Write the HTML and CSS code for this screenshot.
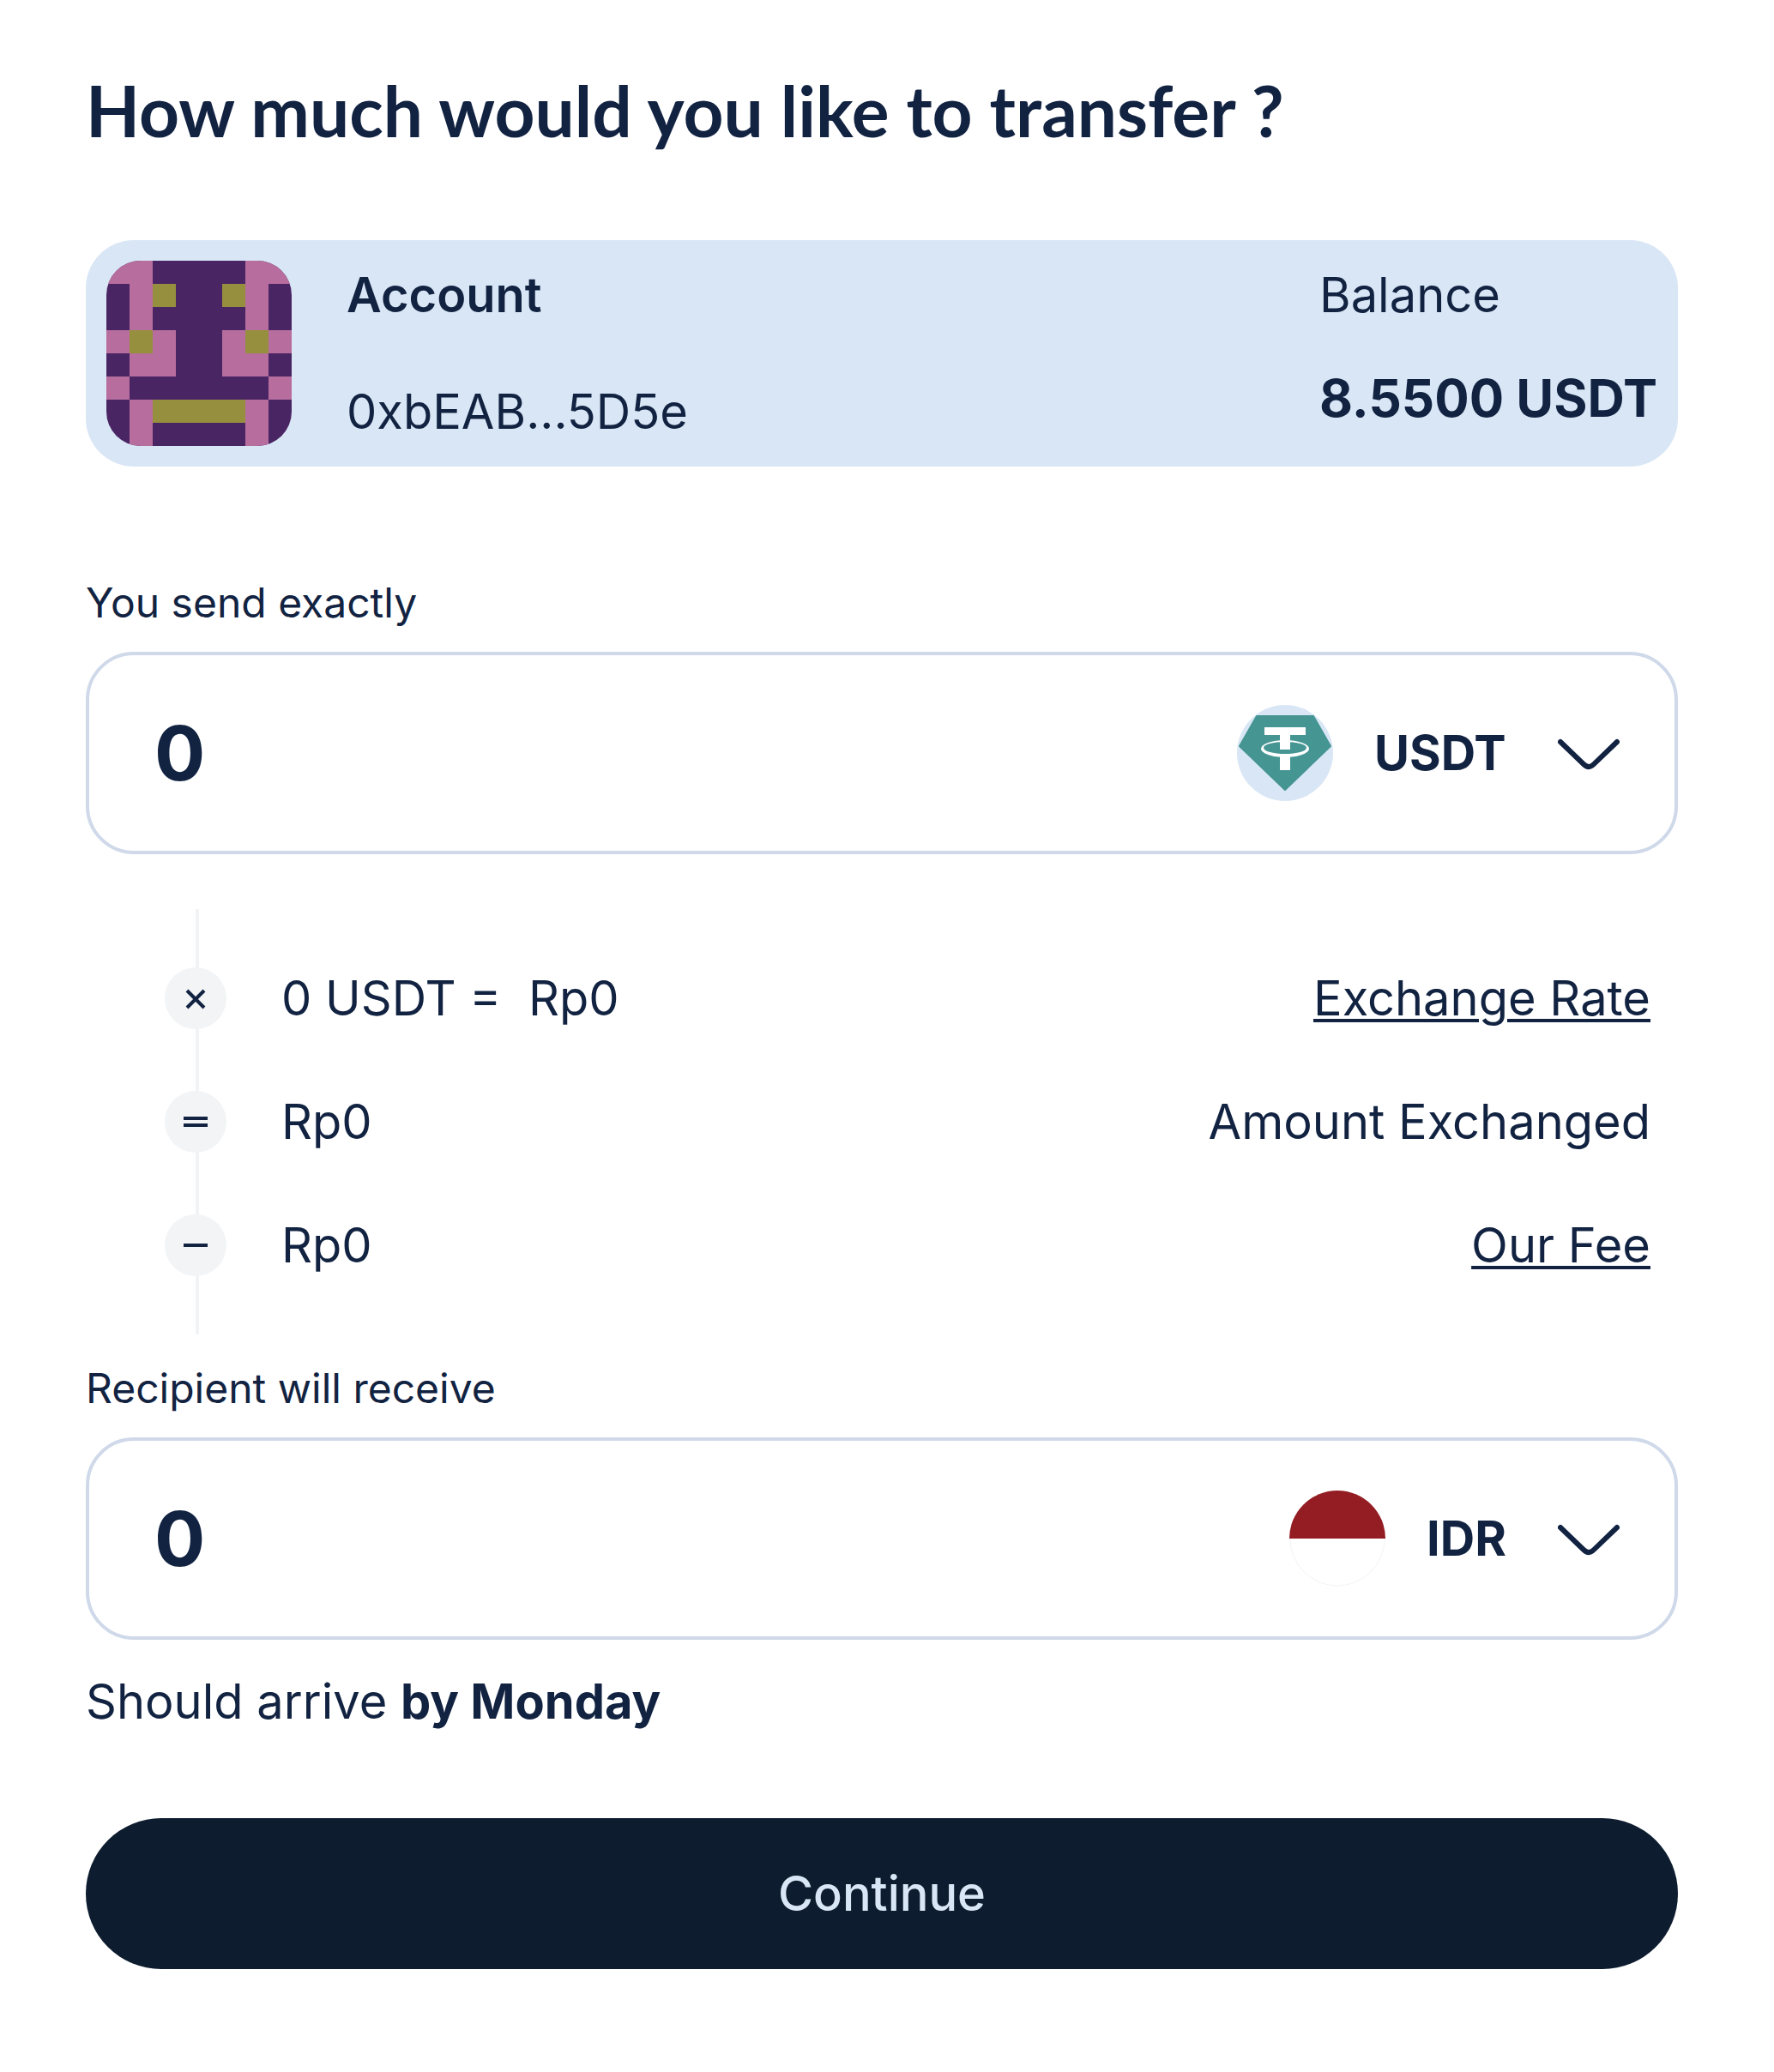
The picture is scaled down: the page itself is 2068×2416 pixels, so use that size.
FILE: index.html
```html
<!DOCTYPE html>
<html lang="en">
<head>
    <meta charset="UTF-8">
    <meta name="viewport" content="width=device-width, initial-scale=1.0">
    <title>Transfer</title>
    <link rel="stylesheet" href="styles.css">
</head>
<body>

    <form class="transfer">
        <h1>How much would you like to transfer ?</h1>

        <div class="account">
            <svg class="avatar" viewBox="0 0 8 8" shape-rendering="crispEdges" aria-hidden="true">
                <rect width="8" height="8" fill="#4a2564"/>
                <path fill="#b76d9d" d="M0 0h2v8h-1v-7h-1zM6 0h2v1h-1v7h-1zM0 3h3v2h-2v-1h-1zM5 3h3v1h-1v1h-2zM0 5h1v1h-1zM7 5h1v1h-1z"/>
                <path fill="#4a2564" d="M1 5h6v1h-6z"/>
                <path fill="#958f3e" d="M2 1h1v1h-1zM5 1h1v1h-1zM1 3h1v1h-1zM6 3h1v1h-1zM2 6h4v1h-4z"/>
            </svg>
            <div class="account-info">
                <strong class="account-name">Account</strong>
                <span>0xbEAB...5D5e</span>
            </div>
            <div class="balance">
                <span>Balance</span>
                <strong class="balance-value">8.5500 USDT</strong>
            </div>
        </div>

        <label class="field-label" for="sendAmount">You send exactly</label>
        <div class="amount-box">
            <input id="sendAmount" class="amount" type="text" inputmode="decimal" value="0">
            <svg class="coin" viewBox="0 0 112 112" aria-hidden="true">
                <circle cx="56" cy="56" r="56" fill="#d9e6f5"/>
                <path fill="#459593" stroke="#459593" stroke-width="2" stroke-linejoin="round" d="M23 13h66l20 35l-53 51l-53-51z"/>
                <ellipse cx="56" cy="51" rx="28" ry="10" fill="#fff"/>
                <ellipse cx="56" cy="50" rx="25" ry="7" fill="#459593"/>
                <path fill="#fff" d="M32 26h48v9h-18v17h-12v-17h-18zM50 58h12v18h-12z"/>
            </svg>
            <div class="currency">
                <select aria-label="Send currency">
                    <option>USDT</option>
                </select>
                <svg class="chevron" viewBox="0 0 72 40" aria-hidden="true">
                    <path d="M3 7L30 33Q36 39 42 33L69 7"/>
                </svg>
            </div>
        </div>

        <ul class="breakdown">
            <li>
                <svg class="sign" viewBox="0 0 72 72" aria-hidden="true"><path d="M26 27L46 47M46 27L26 47"/></svg>
                <span class="sum">0 USDT =&nbsp; Rp0</span>
                <a href="#rate">Exchange Rate</a>
            </li>
            <li>
                <svg class="sign" viewBox="0 0 72 72" aria-hidden="true"><path d="M22 32H50M22 40H50"/></svg>
                <span class="sum">Rp0</span>
                <span>Amount Exchanged</span>
            </li>
            <li>
                <svg class="sign" viewBox="0 0 72 72" aria-hidden="true"><path d="M22 36H50"/></svg>
                <span class="sum">Rp0</span>
                <a href="#fee">Our Fee</a>
            </li>
        </ul>

        <label class="field-label" for="receiveAmount">Recipient will receive</label>
        <div class="amount-box">
            <input id="receiveAmount" class="amount" type="text" inputmode="decimal" value="0">
            <svg class="coin" viewBox="0 0 112 112" aria-hidden="true">
                <circle cx="56" cy="56" r="55" fill="#fff" stroke="#f3f3f3"/>
                <path fill="#931d23" d="M0 56a56 56 0 0 1 112 0z"/>
            </svg>
            <div class="currency">
                <select aria-label="Receive currency">
                    <option>IDR</option>
                </select>
                <svg class="chevron" viewBox="0 0 72 40" aria-hidden="true">
                    <path d="M3 7L30 33Q36 39 42 33L69 7"/>
                </svg>
            </div>
        </div>

        <p class="arrival">Should arrive <strong>by Monday</strong></p>

        <button class="continue" type="button">Continue</button>
    </form>

</body>
</html>
```

FILE: styles.css
```css
* {
    box-sizing: border-box;
}
body {
    margin: 0;
    background-color: #fff;
    color: #122342;
    font-family: Inter, "Liberation Sans", sans-serif;
    font-size: 56px;
    line-height: 80px;
}
.transfer {
    padding: 80px 112px 120px 100px;
}
h1 {
    margin: 0 0 104px;
    font-family: Lato, Inter, sans-serif;
    font-size: 82px;
    font-weight: 700;
    line-height: 96px;
}
strong {
    font-weight: 700;
}

/* account card */
.account {
    display: flex;
    margin-bottom: 120px;
    padding: 24px;
    background-color: #d9e6f5;
    border-radius: 56px;
}
.avatar {
    width: 216px;
    height: 216px;
    margin-right: 64px;
    border-radius: 40px;
}
.account-info {
    display: flex;
    flex: 1;
    flex-direction: column;
    justify-content: space-between;
}
.account-name {
    font-weight: 600;
}
.balance {
    display: flex;
    flex-direction: column;
    gap: 40px;
}
.balance-value {
    font-size: 60px;
}

/* amount fields */
.field-label {
    display: block;
    margin-bottom: 18px;
    font-size: 48px;
    line-height: 78px;
}
.amount-box {
    display: flex;
    align-items: center;
    height: 236px;
    padding: 0 64px 0 76px;
    border: 4px solid #cfd9e9;
    border-radius: 56px;
}
.amount {
    flex: 1;
    min-width: 0;
    padding: 0;
    border: none;
    outline: none;
    background: none;
    color: inherit;
    font: inherit;
    font-size: 88px;
    font-weight: 700;
    line-height: 112px;
}
.coin {
    width: 112px;
    height: 112px;
    margin-right: 48px;
}
.currency {
    display: grid;
    align-items: center;
}
.currency select {
    grid-area: 1 / 1;
    padding: 0 132px 0 0;
    border: none;
    background: none;
    color: inherit;
    font: inherit;
    font-weight: 700;
    appearance: none;
    cursor: pointer;
}
.chevron {
    grid-area: 1 / 1;
    justify-self: end;
    width: 72px;
    height: 40px;
    fill: none;
    stroke: #122342;
    stroke-width: 6;
    stroke-linecap: round;
    pointer-events: none;
}

/* rate and fee rows, strung on a vertical line */
.breakdown {
    position: relative;
    display: flex;
    flex-direction: column;
    gap: 72px;
    margin: 64px 0 24px;
    padding: 68px 32px 68px 92px;
    list-style: none;
}
.breakdown::before {
    content: "";
    position: absolute;
    top: 0;
    bottom: 0;
    left: 128px;
    width: 4px;
    background-color: #f2f3f5;
}
.breakdown li {
    display: flex;
    align-items: center;
    height: 72px;
}
.sign {
    position: relative;
    width: 72px;
    height: 72px;
    margin-right: 64px;
    border-radius: 50%;
    background-color: #f2f4f6;
    stroke: #122342;
    stroke-width: 4;
}
.sum {
    flex: 1;
}
.breakdown a {
    color: inherit;
    text-decoration-thickness: 4px;
    text-underline-offset: 4px;
}

.arrival {
    margin: 28px 0 92px;
    line-height: 88px;
}
.continue {
    display: block;
    width: 100%;
    height: 176px;
    border: none;
    border-radius: 88px;
    background-color: #0d1c2e;
    color: #d9e6f5;
    font: inherit;
    font-weight: 500;
    cursor: pointer;
}
```
